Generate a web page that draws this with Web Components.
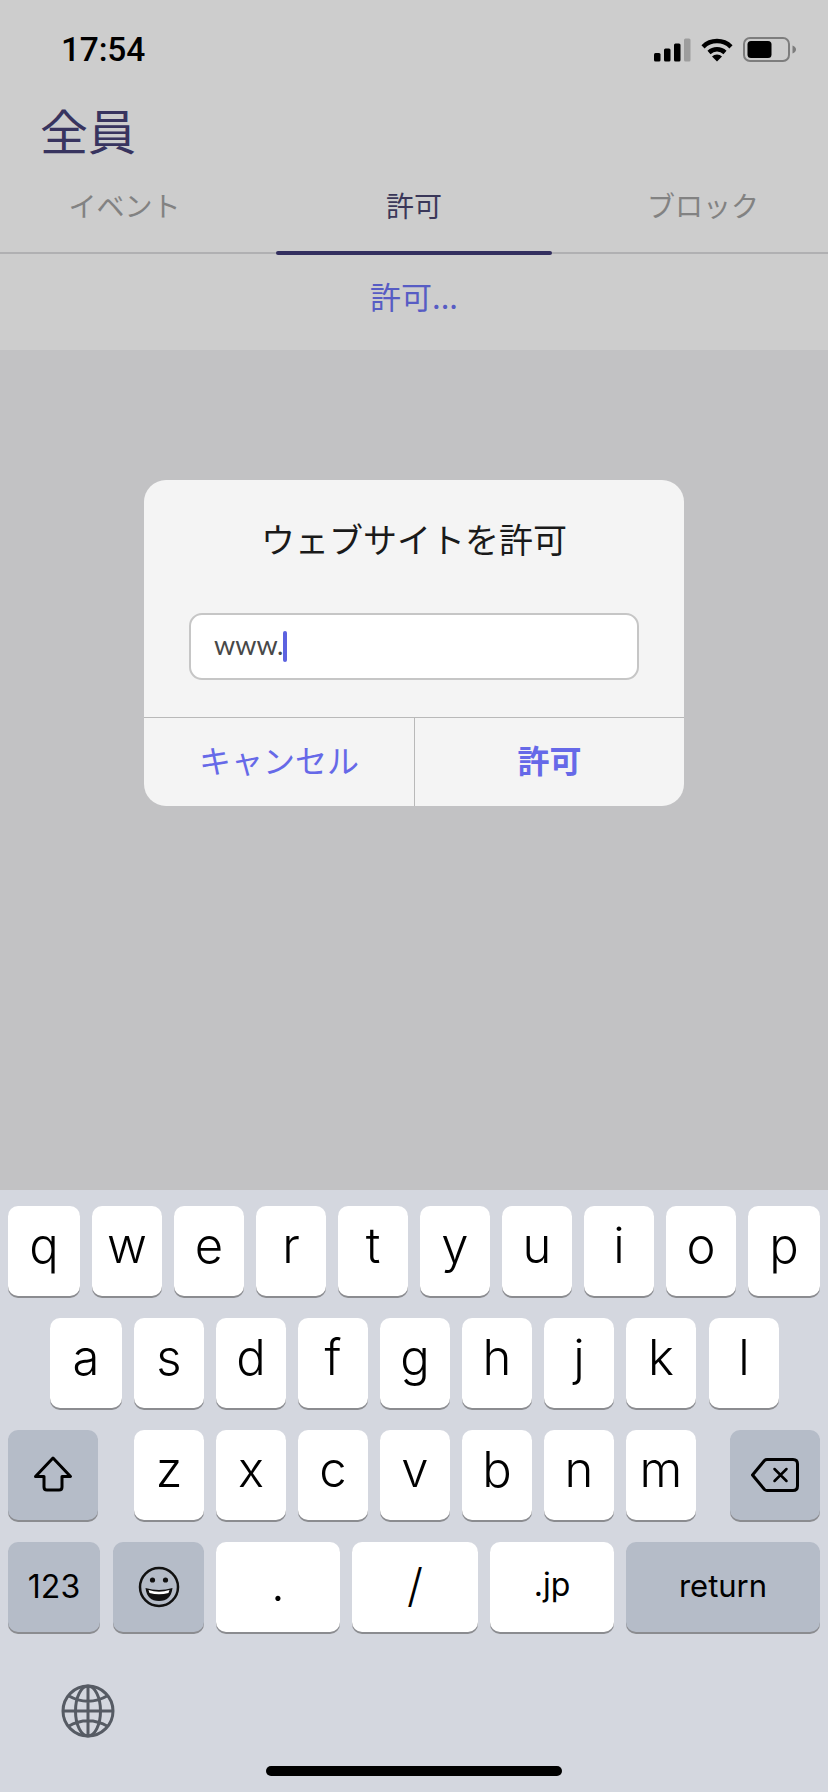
<!DOCTYPE html>
<html lang="ja"><head><meta charset="utf-8"><title>許可</title>
<style>
html,body{margin:0;padding:0;background:#cdcdcd}
body{width:828px;height:1792px;overflow:hidden;font-family:"Noto Sans CJK JP","Noto Sans",sans-serif}
</style></head><body>
<x-app>
  <x-status-bar slot="top" time="17:54"></x-status-bar>
  <x-page-title slot="top">全員</x-page-title>
  <x-tabs slot="top">
    <x-tab style="--pad-l:0px;--pad-r:27px;width:276px">イベント</x-tab>
    <x-tab active style="width:276px">許可</x-tab>
    <x-tab style="--pad-l:26px;--pad-r:0px;width:276px;">ブロック</x-tab>
  </x-tabs>
  <x-allow-row slot="top">許可...</x-allow-row>
  <x-dialog slot="middle" heading="ウェブサイトを許可" value="www." cancel="キャンセル" ok="許可"></x-dialog>
  <x-keyboard slot="bottom">
    <x-key-row style="--gap:12px;--left:8px">
      <x-key style="--w:72px">q</x-key><x-key>w</x-key><x-key>e</x-key><x-key>r</x-key><x-key>t</x-key><x-key>y</x-key><x-key>u</x-key><x-key>i</x-key><x-key>o</x-key><x-key style="--w:72px">p</x-key>
    </x-key-row>
    <x-key-row style="--gap:12px;--left:50px">
      <x-key style="--w:72px">a</x-key><x-key>s</x-key><x-key>d</x-key><x-key>f</x-key><x-key>g</x-key><x-key>h</x-key><x-key>j</x-key><x-key>k</x-key><x-key style="--w:70px;margin-left:1px">l</x-key>
    </x-key-row>
    <x-key-row style="--gap:12px;--left:8px">
      <x-key dark icon style="--w:90px;margin-right:24px"><svg width="44" height="40" viewBox="0 0 44 40" fill="none" stroke="#000" stroke-width="3" stroke-linejoin="round"><path d="M22 3 L39.500 21.500 H31 V32 Q31 35 28 35 H16 Q13 35 13 32 V21.500 H4.500 Z"/></svg></x-key>
      <x-key>z</x-key><x-key>x</x-key><x-key>c</x-key><x-key>v</x-key><x-key>b</x-key><x-key>n</x-key><x-key>m</x-key>
      <x-key dark icon style="--w:90px;margin-left:22px"><svg width="52" height="38" viewBox="0 0 52 38" fill="none" stroke="#000" stroke-width="3" stroke-linejoin="round" stroke-linecap="round"><path d="M18 3.500 H44 Q48.500 3.500 48.500 8 V30 Q48.500 34.500 44 34.500 H18 Q16.500 34.500 15.500 33.500 L3.500 19 L15.500 4.500 Q16.500 3.500 18 3.500 Z"/><path d="M25.500 13 L37.500 25 M37.500 13 L25.500 25" stroke-width="2.500"/></svg></x-key>
    </x-key-row>
    <x-key-row style="--gap:12px;--left:8px">
      <x-key dark small style="--w:92px;margin-right:1px;--base:57px">123</x-key>
      <x-key dark icon style="--w:91px"><svg width="44" height="44" viewBox="0 0 44 44"><circle cx="22" cy="22" r="19" fill="none" stroke="#111" stroke-width="2.500"/><circle cx="15.500" cy="15" r="2.600" fill="#111"/><circle cx="28.500" cy="15" r="2.600" fill="#111"/><path d="M8.500 23 Q22 27 35.500 23 Q34 36 22 36 Q10 36 8.500 23 Z" fill="#111"/><path d="M11.500 25 Q22 28.500 32.500 25 L31.500 28 Q22 30.500 12.500 28 Z" fill="#fff"/></svg></x-key>
      <x-key style="--w:124px;--base:60px">.</x-key>
      <x-key style="--w:126px;--size:46px;--base:60px">/</x-key>
      <x-key small style="--w:124px;--base:55px">.jp</x-key>
      <x-key dark small style="--w:194px;--base:55px;--size:31px">return</x-key>
    </x-key-row>
    <x-keyboard-foot></x-keyboard-foot>
  </x-keyboard>
</x-app>
<script>
function def(name, css, html, init){
  customElements.define(name, class extends HTMLElement{
    constructor(){super();this.attachShadow({mode:'open'});}
    connectedCallback(){
      if(this.shadowRoot.firstChild) return;
      const a=n=>this.getAttribute(n)||'';
      this.shadowRoot.innerHTML='<style>'+css+'</style>'+(typeof html==='function'?html(a):html);
    }
  });
}
const CJK='"Noto Sans CJK JP","Noto Sans",sans-serif';
def('x-app',`:host{display:flex;flex-direction:column;width:828px;height:1792px;background:#c2c2c4}
.top{display:block;background:#cdcdcd}.mid{display:block;flex:1;min-height:0}.bot{display:block}`,
`<div class="top"><slot name="top"></slot></div><div class="mid"><slot name="middle"></slot></div><div class="bot"><slot name="bottom"></slot></div>`);

def('x-status-bar',`:host{display:flex;height:100px;box-sizing:border-box;padding:31px 31px 0 61px;justify-content:space-between;align-items:flex-start}
.t{font:500 33.500px/38px Roboto,sans-serif;color:#000;letter-spacing:-.2px}
.i{display:flex;gap:10px;align-items:flex-start;margin-top:6px}
svg{display:block}`,
a=>`<div class="t">${a('time')}</div><div class="i">
<svg width="38" height="25" viewBox="0 0 38 25"><rect x="1" y="16" width="6.500" height="8.500" rx="1.500"/><rect x="11" y="11.500" width="6.500" height="13" rx="1.500"/><rect x="21" y="6.500" width="6.500" height="18" rx="1.500"/><rect x="31" y="1.500" width="6.500" height="23" rx="1.500" fill="#9d9d9d"/></svg>
<svg width="32" height="25" viewBox="0 0 32 25" fill="none" stroke="#000" stroke-width="4.500"><path d="M2 9.800 A20 20 0 0 1 30 9.800"/><path d="M8 15.500 A11.800 11.800 0 0 1 24 15.500"/><path d="M16 24.500 L11 19.600 A7 7 0 0 1 21 19.600 Z" fill="#000" stroke="none"/></svg>
<svg width="54" height="25" viewBox="0 0 54 25"><rect x="1" y="1" width="45" height="23" rx="6" fill="none" stroke="#7d7d7d" stroke-width="2"/><rect x="4.500" y="4" width="24" height="17" rx="3.500"/><path d="M49.500 8.500 Q53 10 53 12.500 Q53 15 49.500 16.500 Z" fill="#7d7d7d"/></svg>
</div>`);

def('x-page-title',`:host{display:block;height:64px;padding-left:40px;font:400 48px/58px ${CJK};color:#38345f}`,`<slot></slot>`);

def('x-tabs',`:host{display:flex;height:88px;border-bottom:2px solid #b0b0b2}`,`<slot></slot>`);
def('x-tab',`:host{display:block;position:relative;box-sizing:border-box;height:88px;padding:0 var(--pad-r,0) 0 var(--pad-l,0);text-align:center;font:400 28px/83px ${CJK};color:#828282}
:host([active]){color:#3a3759}
:host([active])::after{content:"";position:absolute;left:0;right:0;bottom:-3px;height:4px;border-radius:2px;background:#332f5f}`,`<slot></slot>`);
def('x-allow-row',`:host{display:block;height:96px;text-align:center;font:400 31px/84px ${CJK};color:#575cc4}`,`<slot></slot>`);

def('x-dialog',`:host{display:block;box-sizing:border-box;width:540px;height:326px;margin:130px auto 0;background:#f4f4f4;border-radius:22px;overflow:hidden}
h2{margin:0;height:104px;font:400 34px/118px ${CJK};color:#1a1a1a;text-align:center;overflow:hidden}
.f{box-sizing:border-box;display:flex;align-items:center;width:450px;height:67px;margin:29px 0 0 45px;padding-left:23px;background:#fff;border:2px solid #c6c6c6;border-radius:13px;font:400 27px/36px Lato,sans-serif;color:#484848}
.v{margin-top:-3px}
.c{display:inline-block;width:4px;height:31px;border-radius:2px;background:#5c62e0}
.b{display:grid;grid-template-columns:270px 270px;height:88px;margin-top:37px;border-top:1px solid #b9b9b9;font:400 32px/82px ${CJK};color:#6669e8;text-align:center}
.b div+div{border-left:1px solid #b9b9b9;font-weight:700}`,
a=>`<h2>${a('heading')}</h2><div class="f"><span class="v">${a('value')}</span><span class="c"></span></div><div class="b"><div>${a('cancel')}</div><div>${a('ok')}</div></div>`);

def('x-keyboard',`:host{display:block;box-sizing:border-box;height:602px;padding-top:16px;background:#d4d7df}`,`<slot></slot>`);
def('x-key-row',`:host{display:flex;gap:var(--gap);padding-left:var(--left);height:90px;margin-bottom:22px}`,`<slot></slot>`);
def('x-key',`:host{display:block;box-sizing:border-box;width:var(--w,70px);height:90px;border-radius:10px;background:#fff;box-shadow:0 2px 0 #8b8c90;text-align:center;color:#000;
 font:350 var(--size,49px)/calc(2 * var(--base,58px) - var(--size,49px) * .727) Inter,sans-serif}
:host([dark]){background:#b5bcc8}
:host([small]){--size:32px;font-weight:400}
:host([icon]) .w{display:flex;align-items:center;justify-content:center}
::slotted(svg){display:block}
.w{display:block;height:90px}`,`<div class="w"><slot></slot></div>`);
def('x-keyboard-foot',`:host{display:block;position:relative;height:138px}
svg{display:block;position:absolute;left:60px;top:29px}
.h{position:absolute;left:266px;top:112px;width:296px;height:10px;border-radius:5px;background:#000}`,
`<svg width="56" height="56" viewBox="0 0 56 56" fill="none" stroke="#565b64" stroke-width="3"><circle cx="28" cy="28" r="25"/><ellipse cx="28" cy="28" rx="12.500" ry="25"/><path d="M28 3 V53 M3 28 H53 M8 12.500 Q28 24 48 12.500 M8 43.500 Q28 32 48 43.500"/></svg><div class="h"></div>`);
</script>
</body></html>
